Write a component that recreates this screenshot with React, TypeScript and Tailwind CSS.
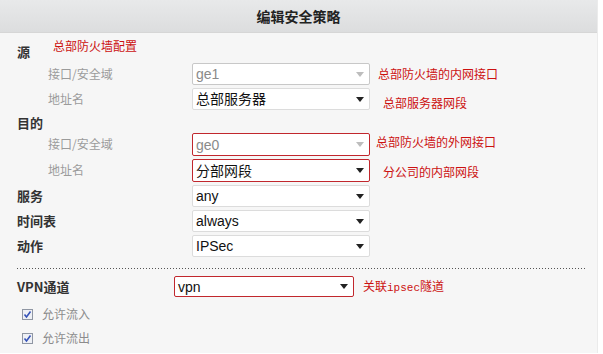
const font = "font-['Noto_Sans_CJK_SC','Noto_Sans',sans-serif]";
const latin = "font-['Liberation_Sans','Noto_Sans_CJK_SC',sans-serif]";

function Select({
  value,
  disabled = false,
  alert = false,
  width = "w-[178px]",
  height = "h-[22px]",
}: {
  value: string;
  disabled?: boolean;
  alert?: boolean;
  width?: string;
  height?: string;
}) {
  return (
    <div
      className={`${width} ${height} flex items-center justify-between rounded-[2px] border bg-white pl-[3px] pr-[5px] ${latin} text-[14px] ${
        alert ? "border-[#c1272d]" : disabled ? "border-[#c8c8c8]" : "border-[#dcdcdc]"
      } ${disabled ? "text-[#8a8a8a]" : "text-[#111]"}`}
    >
      <span className="leading-none">{value}</span>
      <svg width="8" height="5" viewBox="0 0 8 5">
        <path d="M0 0H8L4 5Z" fill={disabled ? "#bdbdbd" : "#222"} />
      </svg>
    </div>
  );
}

function Note({ children, className = "" }: { children: React.ReactNode; className?: string }) {
  return <span className={`${font} text-[12px] leading-[16px] text-[#cc1111] ${className}`}>{children}</span>;
}

function SubRow({
  label,
  children,
  h = "h-[25px]",
}: {
  label: string;
  children: React.ReactNode;
  h?: string;
}) {
  return (
    <div className={`flex ${h} items-start`}>
      <div className={`w-[175px] h-[22px] flex items-center pl-[31px] ${font} text-[12px] text-[#9b9b9b]`}>{label}</div>
      {children}
    </div>
  );
}

function MainRow({ label, value }: { label: string; value: string }) {
  return (
    <div className="flex h-[25px] items-start">
      <div className={`w-[175px] h-[22px] flex items-center ${font} text-[13px] font-bold text-[#333]`}>{label}</div>
      <Select value={value} />
    </div>
  );
}

function Check({ label }: { label: string }) {
  return (
    <div className="flex h-[24px] items-center pl-[5px]">
      <svg width="11" height="11" viewBox="0 0 11 11">
        <rect x="0.5" y="0.5" width="10" height="10" fill="#eef0f5" stroke="#8f96a3" />
        <path d="M2.5 5.5L4.5 8L8.5 2.5" fill="none" stroke="#3552b8" strokeWidth="1.6" />
      </svg>
      <span className={`ml-[9px] ${font} text-[12px] text-[#8c8c8c]`}>{label}</span>
    </div>
  );
}

export default function App() {
  return (
    <div className="w-[603px] h-[354px] bg-white">
      <div className="w-[598px] h-[353px] bg-[#f6f6f6] border-r border-[#ebebeb]">
        <div className="h-[33px] flex items-center justify-center bg-[linear-gradient(#e8e9ea,#dcddde)] border-b border-[#d6d6d6]">
          <span className={`${font} text-[14px] font-bold text-[#222]`}>编辑安全策略</span>
        </div>

        <div className="pl-[17px]">
          <div className="flex h-[30px] items-start">
            <span className={`mt-[11px] ${font} text-[13px] leading-[16px] font-bold text-[#333]`}>源</span>
            <Note className="ml-[23px] mt-[5px]">总部防火墙配置</Note>
          </div>
          <SubRow label="接口/安全域">
            <Select value="ge1" disabled />
            <Note className="ml-[8px] mt-[3px]">总部防火墙的内网接口</Note>
          </SubRow>
          <SubRow label="地址名">
            <Select value="总部服务器" />
            <Note className="ml-[13px] mt-[7px]">总部服务器网段</Note>
          </SubRow>
          <div className="flex h-[20px] items-center">
            <span className={`${font} text-[13px] font-bold text-[#333]`}>目的</span>
          </div>
          <SubRow label="接口/安全域" h="h-[26px]">
            <Select value="ge0" disabled alert height="h-[23px]" />
            <Note className="ml-[6px] mt-[1px]">总部防火墙的外网接口</Note>
          </SubRow>
          <SubRow label="地址名" h="h-[26px]">
            <Select value="分部网段" alert height="h-[23px]" />
            <Note className="ml-[13px] mt-[5px]">分公司的内部网段</Note>
          </SubRow>
          <MainRow label="服务" value="any" />
          <MainRow label="时间表" value="always" />
          <MainRow label="动作" value="IPSec" />

          <div className="mt-[8px] w-[568px] h-px bg-[repeating-linear-gradient(to_right,#555_0_1px,transparent_1px_3px)]" />

          <div className="mt-[7px] flex h-[21px] items-center">
            <div className={`w-[157px] ${font} text-[13px] font-bold text-[#333]`}>VPN通道</div>
            <Select value="vpn" alert width="w-[180px]" height="h-[21px]" />
            <span className={`ml-[9px] ${font} text-[12px] text-[#cc1111]`}>
              关联<span className="font-['Liberation_Mono',monospace] text-[11px]">ipsec</span>隧道
            </span>
          </div>

          <div className="mt-[5px]">
            <Check label="允许流入" />
            <Check label="允许流出" />
          </div>
        </div>
      </div>
    </div>
  );
}
